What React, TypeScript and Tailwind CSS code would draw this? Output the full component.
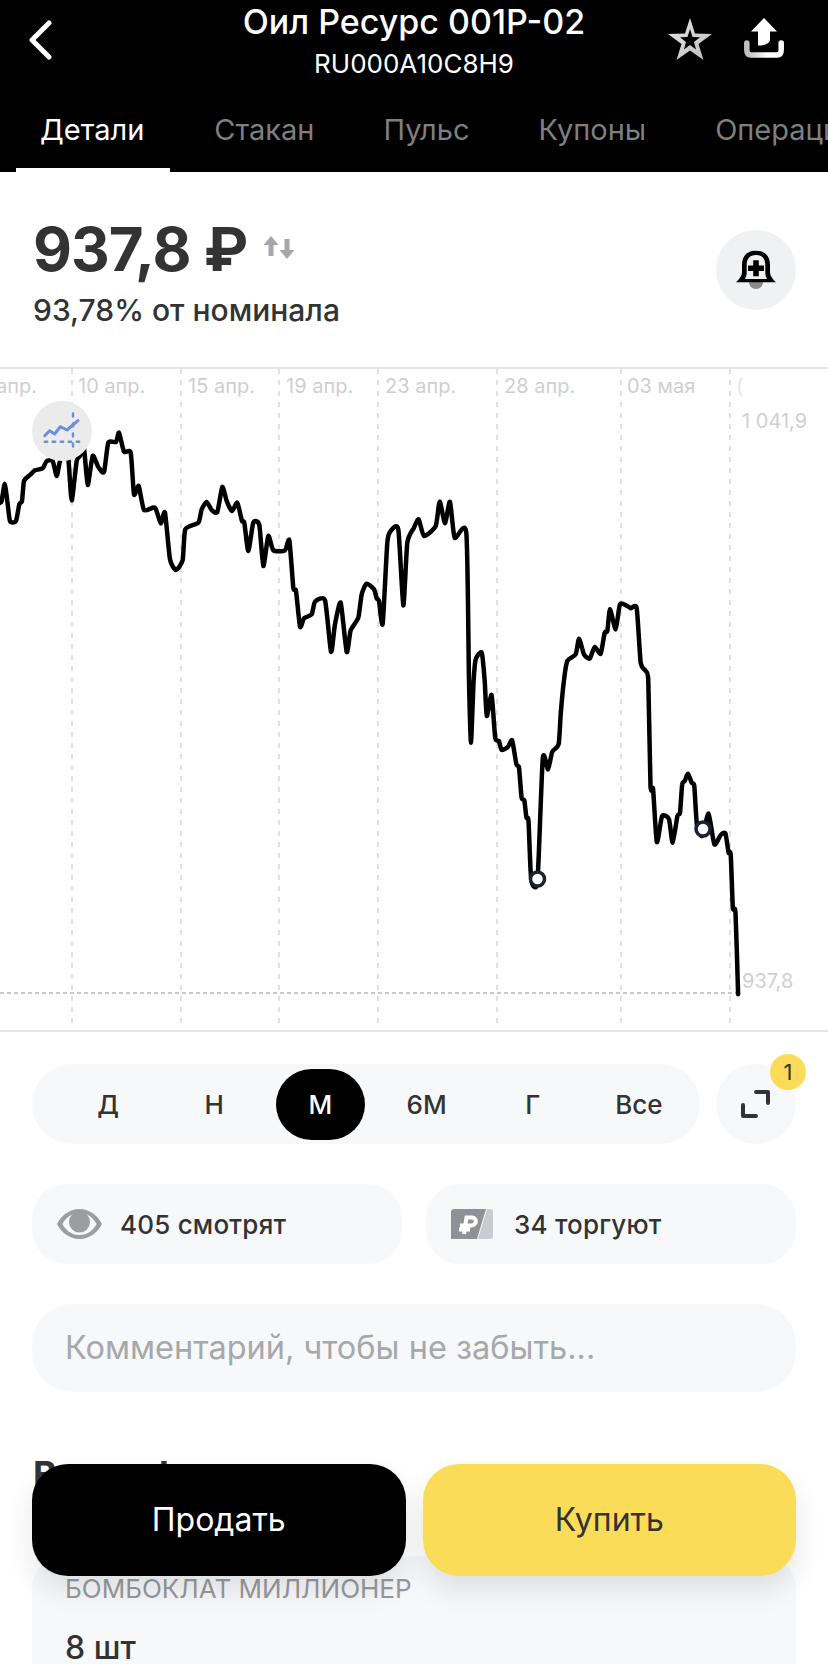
import React from "react";

const z2: number[][] = [[-6,430],[0,425],[5,420],[14,368],[22,420],[30,480],[48,480],[58,430],[66,420],[72,360],[90,342],[105,328],[128,322],[140,300],[158,300],[170,345],[180,300],[195,280],[205,290],[215,418],[230,300],[240,285],[252,262],[263,372],[278,285],[295,318],[312,333],[325,245],[348,243],[357,215],[372,272],[392,275],[402,400],[416,375],[432,447],[465,440],[482,487],[495,455],[510,595],[528,627],[548,597],[556,505],[595,485],[605,445],[620,423],[635,447],[652,453],[667,378],[680,420],[696,450],[712,425],[726,480],[733,485],[745,570],[760,485],[778,492],[790,615],[805,525],[820,568],[855,568],[868,538],[880,680],[888,690],[900,797],[912,772],[935,760],[945,722],[975,718],[993,872],[1005,790],[1022,725],[1040,873],[1052,808],[1075,770],[1085,700],[1100,668],[1122,685],[1130,712],[1137,720],[1148,788],[1162,545],[1172,510],[1195,505],[1210,733],[1222,545],[1242,500]];
const z3a: number[][] = [[14,475],[30,525],[65,495],[77,422],[93,487],[108,422],[122,530],[157,515],[165,960]];
const z4a: number[][] = [[892,185],[897,0]];
const z3b: number[][] = [[185,895],[203,875],[212,960]];
const z4b: number[][] = [[922,105],[931,42],[938,170],[945,180],[950,207],[962,198],[970,178],[978,250],[983,260],[988,350],[993,358],[997,410],[1001,420],[1006,595],[1018,600],[1028,232],[1038,265],[1046,212],[1058,190],[1062,100],[1068,0]];
const z3c: number[][] = [[460,900],[485,880],[495,833],[510,880],[527,893],[542,858],[560,878],[572,815],[580,810],[588,745],[605,805],[618,730],[640,735],[650,742],[668,742],[680,905],[695,930],[703,960]];
const z4c: number[][] = [[1232,315],[1237,325],[1244,483],[1254,405],[1267,415],[1274,485],[1283,405],[1288,395],[1292,310],[1297,300],[1303,278],[1310,305],[1315,315],[1320,430],[1330,465],[1342,398],[1353,490],[1365,462],[1374,457],[1380,515],[1384,520],[1388,680],[1393,695],[1398,940]];

const mapA = (o: number) => (p: number[]) => [o + p[0] / 3, 360 + p[1] / 3 - 368];
const mapB = (p: number[]) => [p[0] / 1.894, 680 + p[1] / 3 - 368];

const pts: number[][] = [
  ...z2.map(mapA(0)),
  ...z3a.map(mapA(414)),
  ...z4a.map(mapB),
  ...z3b.map(mapA(414)),
  ...z4b.map(mapB),
  ...z3c.map(mapA(414)),
  ...z4c.map(mapB),
];

function smooth(p: number[][]) {
  let d = `M${p[0][0].toFixed(1)} ${p[0][1].toFixed(1)}`;
  const k = 1 / 10;
  for (let i = 0; i < p.length - 1; i++) {
    const a = p[Math.max(0, i - 1)];
    const b = p[i];
    const c = p[i + 1];
    const e = p[Math.min(p.length - 1, i + 2)];
    const c1x = b[0] + (c[0] - a[0]) * k;
    const c1y = b[1] + (c[1] - a[1]) * k;
    const c2x = c[0] - (e[0] - b[0]) * k;
    const c2y = c[1] - (e[1] - b[1]) * k;
    d += `C${c1x.toFixed(1)} ${c1y.toFixed(1)} ${c2x.toFixed(1)} ${c2y.toFixed(1)} ${c[0].toFixed(1)} ${c[1].toFixed(1)}`;
  }
  return d;
}

const gridX = [72, 181, 279, 378, 497, 621, 730];
const dates: [string, string][] = [
  ["-left-[4px]", "апр."],
  ["left-[78px]", "10 апр."],
  ["left-[188px]", "15 апр."],
  ["left-[286px]", "19 апр."],
  ["left-[385px]", "23 апр."],
  ["left-[504px]", "28 апр."],
  ["left-[627px]", "03 мая"],
];

function Chart() {
  return (
    <div className="relative h-[665px] overflow-hidden border-y-2 border-[#e6e6e7]">
      <svg className="absolute left-0 top-0" width="828" height="664" viewBox="0 0 828 664" fill="none">
        {gridX.map((x) => (
          <line key={x} x1={x} x2={x} y1="0" y2="658" stroke="#e0e0e2" strokeWidth="2" strokeDasharray="5 6" />
        ))}
        <line x1="0" x2="738" y1="624" y2="624" stroke="#c9c9cb" strokeWidth="2" strokeDasharray="4 3" />
        <path d={smooth(pts)} stroke="#000" strokeWidth="4.5" strokeLinejoin="round" strokeLinecap="round" />
        <circle cx="537.5" cy="510" r="7" fill="#fff" stroke="#1c2030" strokeWidth="3.5" />
        <circle cx="703" cy="460" r="7" fill="#fff" stroke="#1c2030" strokeWidth="3.5" />
      </svg>
      {dates.map(([pos, t]) => (
        <span key={t} className={`absolute top-[5px] text-[20px] leading-[24px] text-[#cfcfd1] ${pos}`}>{t}</span>
      ))}
      <span className="absolute left-[736px] top-[5px] text-[20px] leading-[24px] text-[#e4e4e5]">(</span>
      <span className="absolute left-[742px] top-[40px] text-[20px] leading-[24px] text-[#cfcfd1]">1 041,9</span>
      <span className="absolute left-[742px] top-[600px] text-[20px] leading-[24px] text-[#cfcfd1]">937,8</span>
      <div className="absolute left-[32px] top-[32px] flex h-[60px] w-[60px] items-center justify-center rounded-full bg-[#ebebec]">
        <svg width="60" height="60" viewBox="0 0 60 60" fill="none" stroke="#6b8fd8" strokeLinecap="round" strokeLinejoin="round">
          <path d="M12.7 34.7 17.7 29.7 22.7 33 28.3 25.7 35 29 46 19.7" strokeWidth="3" />
          <path d="M12.7 40.7H48" strokeWidth="2.4" strokeDasharray="2.5 5.5" />
          <path d="M41 12.5V49" strokeWidth="2.4" strokeDasharray="3 7" />
        </svg>
      </div>
    </div>
  );
}

function Stat({ icon, text }: { icon: React.ReactNode; text: string }) {
  return (
    <div className="flex h-[80px] flex-1 items-center rounded-[34px] bg-[#f7f8f9] pl-[25px] text-[26px] font-medium tracking-[0.2px] text-[#333]">
      <span className="mr-[18px] flex h-[32px] w-[45px] items-center">{icon}</span>
      {text}
    </div>
  );
}

export default function App() {
  const periods = ["Д", "Н", "М", "6М", "Г", "Все"];
  return (
    <div className="relative h-[1664px] w-[828px] overflow-hidden bg-white font-['Inter','Noto_Sans',sans-serif]">
      <header className="flex h-[172px] flex-col bg-black text-white">
        <div className="grid h-[83px] grid-cols-[1fr_auto_1fr]">
          <div className="pl-[27px] pt-[20px]">
            <svg width="26" height="40" viewBox="0 0 26 40" fill="none">
              <path d="M22 3 5 20l17 17" stroke="#fff" strokeWidth="5" strokeLinecap="round" strokeLinejoin="round" />
            </svg>
          </div>
          <div className="flex flex-col items-center pt-[2px]">
            <div className="text-[34px] font-medium leading-[40px]">Оил Ресурс 001Р-02</div>
            <div className="mt-[7px] text-[26px] leading-[30px]">RU000A10C8H9</div>
          </div>
          <div className="flex justify-end pr-[44px] pt-[18px]">
            <svg width="44" height="42" viewBox="0 0 44 42">
              <defs>
                <linearGradient id="st" x1="0" y1="0" x2="1" y2="1">
                  <stop offset="0" stopColor="#e8e8e8" />
                  <stop offset="1" stopColor="#bcbcbc" />
                </linearGradient>
              </defs>
              <path fillRule="evenodd" fill="url(#st)" d="M22 0 27 15.500 44 16 30.500 26 35.500 42 22 32.500 8.500 42 13.500 26 0 16 17 15.500ZM22 11 19.500 19 12 19.300 18 24 16 31.500 22 27 28 31.500 26 24 32 19.300 24.500 19Z" />
            </svg>
            <svg className="ml-[32px]" width="40" height="40" viewBox="0 0 40 40">
              <defs>
                <linearGradient id="sh" x1="0" y1="0" x2="1" y2="0">
                  <stop offset="0" stopColor="#bdbdbd" />
                  <stop offset="0.6" stopColor="#fff" />
                </linearGradient>
              </defs>
              <path fill="#fff" d="M20 0 33 13.500H26V21C26 25 22.500 27.500 14 27.500V13.500H7Z" />
              <path fill="none" stroke="url(#sh)" strokeWidth="5.500" strokeLinecap="round" strokeLinejoin="round" d="M2.800 25V32C2.800 35 4 37 7 37H33C36 37 37.200 35 37.200 32V25" />
            </svg>
          </div>
        </div>
        <nav className="ml-[16px] flex h-[89px] gap-[19px] overflow-hidden whitespace-nowrap text-[29px] leading-[34px] text-[#7f7f7f]">
          {["Детали", "Стакан", "Пульс", "Купоны", "Операции"].map((t, i) => (
            <div
              key={t}
              className={i === 0
                ? "border-b-4 border-white pl-[24px] pr-[26px] pt-[30px] text-white"
                : "px-[25px] pt-[30px]"}
            >
              {t}
            </div>
          ))}
        </nav>
      </header>

      <section className="flex h-[195px] items-start justify-between pl-[33px] pr-[32px] pt-[42px]">
        <div>
          <div className="flex items-start">
            <span className="text-[60px] font-bold leading-[70px] tracking-[-1px] text-[#333]">937,8 ₽</span>
            <svg className="ml-[16px] mt-[22px]" width="32" height="24" viewBox="0 0 32 24" fill="#a5a7ab">
              <path d="M8 0 15.500 9H10.500V20H5.500V9H0.500Z" />
              <path d="M24 23 16.500 14H21.500V3H26.500V14H31.500Z" />
            </svg>
          </div>
          <div className="mt-[9px] text-[30px] font-medium leading-[34px] text-[#333]">93,78% от номинала</div>
        </div>
        <div className="mt-[16px] flex h-[80px] w-[80px] items-center justify-center rounded-full bg-[#f0f1f2]">
          <svg width="40" height="40" viewBox="36 31 40 40">
            <path fill="#8a8a8a" d="M49 63H63C63 67 60 70 56 70S49 67 49 63Z" />
            <path fill="#000" fillRule="evenodd" d="M56 31.700C66 31.700 70 38 70 46V53C70 57 73 60.500 76 63.300H36C39 60.500 42 57 42 53V46C42 38 46 31.700 56 31.700ZM56 36C49.500 36 46.700 40 46.700 46V54C46.700 56 46 58 45 60H67C66 58 65.300 56 65.300 54V46C65.300 40 62.500 36 56 36Z" />
            <path fill="#000" d="M53.200 41.300h5.600v5.200h5.200v5.600h-5.200v5.200h-5.600v-5.200H48v-5.600h5.200Z" />
          </svg>
        </div>
      </section>

      <Chart />

      <section className="mt-[32px] flex items-start gap-[16px] pl-[32px] pr-[32px]">
        <div className="grid h-[80px] w-[668px] grid-cols-6 items-center rounded-[40px] bg-[#f7f8f9] pl-[23px] pr-[8px] text-[26px] font-medium text-[#333]">
          {periods.map((p) => (
            <div key={p} className="flex justify-center">
              <span className={p === "М"
                ? "flex h-[71px] w-[89px] items-center justify-center rounded-[36px] bg-black text-white"
                : "flex h-[71px] w-[89px] items-center justify-center"}>{p}</span>
            </div>
          ))}
        </div>
        <div className="relative flex h-[80px] w-[80px] items-center justify-center rounded-full bg-[#f7f8f9]">
          <svg width="30" height="30" viewBox="0 0 30 30" fill="none" stroke="#333" strokeWidth="4" strokeLinecap="round" strokeLinejoin="round">
            <path d="M15 3H27V14" />
            <path d="M2 16V27H15" />
          </svg>
          <span className="absolute -right-[10px] -top-[10px] flex h-[36px] w-[36px] items-center justify-center rounded-full bg-[#fbdc58] text-[22px] text-[#333]">1</span>
        </div>
      </section>

      <section className="mt-[40px] flex gap-[24px] pl-[32px] pr-[32px]">
        <Stat
          text="405 смотрят"
          icon={
            <svg width="45" height="30" viewBox="0 0 45 30">
              <path fill="#9b9da1" fillRule="evenodd" d="M22.500 0C33 0 41 7 45 15 41 23 33 30 22.500 30S4 23 0 15C4 7 12 0 22.500 0ZM22.500 4C14 4 8.500 9 5.500 15 8.500 21 14 26 22.500 26S36.500 21 39.500 15C36.500 9 31 4 22.500 4Z" />
              <circle cx="22.500" cy="13" r="10.500" fill="#9b9da1" />
            </svg>
          }
        />
        <Stat
          text="34 торгуют"
          icon={
            <svg width="42" height="30" viewBox="0 0 42 30">
              <path fill="#c9cbd0" d="M36 0H39C41 0 42 1 42 3V27C42 29 41 30 39 30H27Z" />
              <path fill="#8f9196" d="M3 0H35L26 30H0V3C0 1 1 0 3 0Z" />
              <path fill="none" stroke="#fff" strokeWidth="4" d="M13 25 15.500 8.500H21C26.500 8.500 26 16.500 20 16.500H9M8 20.500H19" />
            </svg>
          }
        />
      </section>

      <section className="mx-[32px] mt-[40px] flex h-[88px] items-center rounded-[40px] bg-[#f7f8f9] pl-[33px] text-[32.5px] text-[#a6a8ac]">
        Комментарий, чтобы не забыть...
      </section>

      <h2 className="ml-[33px] mt-[60px] text-[36px] font-bold leading-[44px] text-[#333]">В портфеле</h2>

      <section className="mx-[32px] mt-[60px] h-[108px] rounded-t-[32px] bg-[#f7f8f9] px-[33px] pt-[18px]">
        <div className="whitespace-nowrap text-[26px] leading-[30px] text-[#98999e]">БОМБОКЛАТ МИЛЛИОНЕР</div>
        <div className="mt-[28px] text-[32px] font-medium leading-[32px] text-[#333]">8 шт</div>
      </section>

      <div className="absolute left-[32px] top-[1464px] flex w-[764px] gap-[17px]">
        <button className="h-[112px] flex-1 rounded-[36px] bg-black text-[32px] text-white shadow-[0_14px_28px_rgba(0,0,0,0.10)]">Продать</button>
        <button className="h-[112px] flex-1 rounded-[36px] bg-[#fbdc58] text-[32px] text-[#333] shadow-[0_14px_28px_rgba(0,0,0,0.10)]">Купить</button>
      </div>
    </div>
  );
}
